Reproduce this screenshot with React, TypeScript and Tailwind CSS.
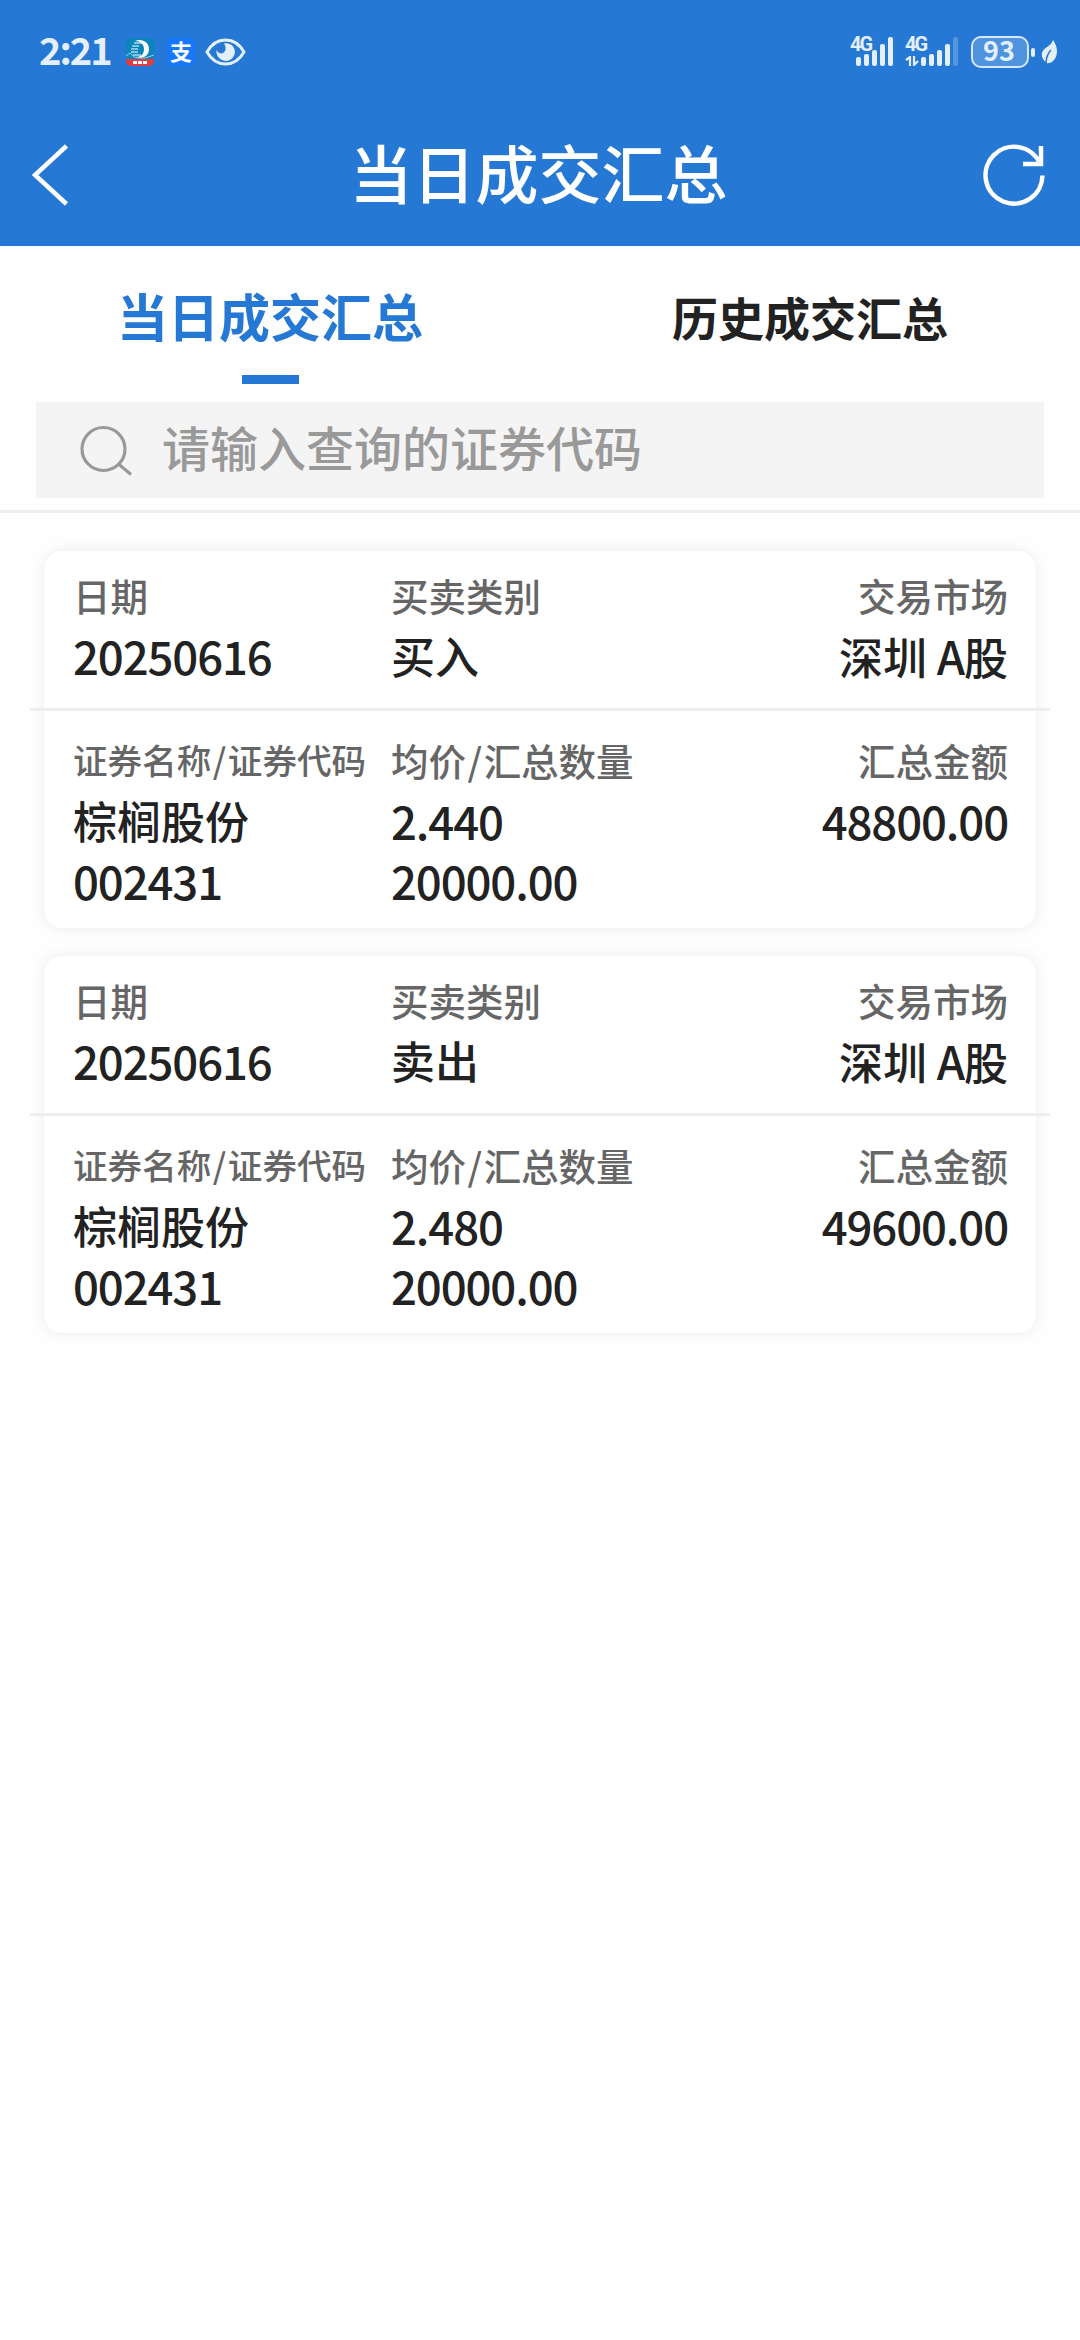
import { ReactNode } from 'react';

interface Trade {
  date: string;
  side: string;
  market: string;
  name: string;
  code: string;
  price: string;
  quantity: string;
  amount: string;
}

const trades: Trade[] = [
  {
    date: '20250616',
    side: '买入',
    market: '深圳 A股',
    name: '棕榈股份',
    code: '002431',
    price: '2.440',
    quantity: '20000.00',
    amount: '48800.00',
  },
  {
    date: '20250616',
    side: '卖出',
    market: '深圳 A股',
    name: '棕榈股份',
    code: '002431',
    price: '2.480',
    quantity: '20000.00',
    amount: '49600.00',
  },
];

function SignalBars({ weak }: { weak?: boolean }) {
  return (
    <svg width="38" height="30" viewBox="0 0 38 30" fill="#e4effc">
      <rect x="0" y="20" width="5" height="9" rx="2" />
      <rect x="8" y="17" width="5" height="12" rx="2" />
      <rect x="16" y="13" width="5" height="16" rx="2" />
      <rect x="24" y="7" width="5" height="22" rx="2" />
      <rect x="32" y="0" width="5" height="29" rx="2" opacity={weak ? 0.25 : 1} />
    </svg>
  );
}

function StatusBar() {
  return (
    <div className="flex h-[104px] items-center pl-[39px] pr-[22px] text-[#e4effc]">
      <span className="w-[87px] pb-[6px] font-['Noto_Sans_CJK_SC',sans-serif] text-[38px] leading-none font-bold tracking-[-2px]">
        2:21
      </span>
      {/* Icône de la banque */}
      <svg width="28" height="28" viewBox="0 0 28 28">
        <rect width="28" height="28" rx="5" fill="#0b86bd" />
        <path d="M0 21h28v2a5 5 0 0 1-5 5H5a5 5 0 0 1-5-5z" fill="#e23c42" />
        <path d="M9 3C16 0 23 4 23 11c0 7-7 11-13 8 5 0 8-3 8-8s-4-8-9-8z" fill="#fff" />
        <path d="M8 5h8M6 8h7M5 11h7M5 14h7M7 17h8" stroke="#fff" strokeWidth="1.2" />
        <path d="M0 18l4-3 4 4 5 1 6 0 9-3" stroke="#8fd0ea" strokeWidth="1" fill="none" />
        <path d="M7 24.500h14" stroke="#fff" strokeWidth="3" strokeDasharray="4 1" />
      </svg>
      <span className="ml-[13px] flex size-[28px] items-center justify-center rounded-[5px] bg-[#1677ff] pb-[4px] font-['Noto_Sans_CJK_SC',sans-serif] text-[22px] leading-none font-bold text-white">
        支
      </span>
      <svg className="ml-[10px]" width="41" height="28" viewBox="0 0 41 28" fill="none">
        <path
          d="M2 14C6.500 6 13 2 20.500 2S34.500 6 39 14c-4.500 8-11 12-18.500 12S6.500 22 2 14z"
          stroke="#e4effc"
          strokeWidth="3"
        />
        <path d="M19 5.500c6-1.500 11 3 11 8.500a9.300 9.300 0 0 1-18.500 1V12c1.500 3 4 4 6.500 3 3-1.500 3.500-5.500 1-9.500z" fill="#e4effc" />
      </svg>

      <div className="ml-auto flex items-center">
        <div className="relative h-[30px] w-[45px]">
          <span className="absolute -top-[3px] left-0 font-['Roboto',sans-serif] text-[20px] leading-none font-bold tracking-[-2px]">4G</span>
          <div className="ml-[6px]">
            <SignalBars />
          </div>
        </div>
        <div className="relative ml-[10px] h-[30px] w-[55px]">
          <span className="absolute -top-[3px] left-0 font-['Roboto',sans-serif] text-[20px] leading-none font-bold tracking-[-2px]">4G</span>
          <svg className="absolute top-[19px] left-0" width="14" height="10" viewBox="0 0 14 10" fill="none" stroke="#e4effc" strokeWidth="2.200">
            <path d="M1 4l4-3v9M9 0v9l4-4" />
          </svg>
          <div className="ml-[16px]">
            <SignalBars weak />
          </div>
        </div>
        <div className="ml-[11px] flex h-[32px] w-[58px] items-center justify-center rounded-[10px] border-2 border-[#d6e8fb] bg-[#5093df] pr-[2px] pb-[5px] font-['Noto_Sans_CJK_SC',sans-serif] text-[27px] leading-none font-bold">
          93
        </div>
        <span className="ml-[2px] h-[9px] w-[4px] rounded-full bg-[#e4effc]" />
        <svg className="ml-[6px]" width="17" height="26" viewBox="0 0 17 26">
          <path d="M12 1c5 7 6 16-1 22-2 1-4 1.500-5 1-7-5-7-12 0-16 3-2 5-4 6-7z" fill="#e4effc" />
          <path d="M10 11C6 15 5 19 5 25" stroke="#2578d4" strokeWidth="1.500" fill="none" />
        </svg>
      </div>
    </div>
  );
}

function Header() {
  return (
    <header className="h-[246px] bg-[#2578d4]">
      <StatusBar />
      <div className="flex h-[142px] items-center justify-between pr-[35px] pb-[1px] pl-[32px]">
        <svg width="62" height="62" viewBox="0 0 62 62" fill="none" stroke="#fff" strokeWidth="4.500">
          <path d="M34.500 2L3 31l31.500 29" />
        </svg>
        <h1 className="pb-[9px] text-[63px] leading-none font-medium text-white">当日成交汇总</h1>
        <svg width="62" height="62" viewBox="0 0 62 62" fill="none" stroke="#fff" strokeWidth="4.500">
          <path d="M59.500 31.500A28.500 28.500 0 1 1 57 19.500" />
          <path d="M58 2v18H40" />
        </svg>
      </div>
    </header>
  );
}

function Tabs() {
  return (
    <div className="flex h-[156px] text-center leading-none">
      <div className="flex flex-1 flex-col items-center pt-[44px]">
        <span className="h-[85px] text-[51px] font-bold text-[#2578d4]">当日成交汇总</span>
        <span className="h-[9px] w-[57px] bg-[#2578d4]" />
      </div>
      <div className="flex-1 pt-[47px] text-[46px] font-bold text-[#222]">历史成交汇总</div>
    </div>
  );
}

function SearchBox() {
  return (
    <div className="h-[111px] border-b-[3px] border-[#eee] px-[36px]">
      <div className="flex h-[96px] items-center bg-[#f4f4f4] pl-[44px]">
        <svg width="53" height="52" viewBox="0 0 53 52" fill="none" stroke="#999" strokeWidth="3.200">
          <circle cx="23.500" cy="25" r="21.500" />
          <path d="M38.500 40L51 50.500" />
        </svg>
        <span className="ml-[29px] pb-[8px] text-[48px] leading-none font-medium text-[#999]">请输入查询的证券代码</span>
      </div>
    </div>
  );
}

// Les chiffres sont un peu plus grands et plus serrés que les caractères chinois
function Num({ children }: { children: ReactNode }) {
  return <span className="text-[45.5px] tracking-[-1.1px]">{children}</span>;
}

function Slash() {
  return <span className="mx-[1.5px]">/</span>;
}

function Label({ children, small }: { children: ReactNode; small?: boolean }) {
  return (
    <div className={`h-[60.5px] leading-[61px] font-medium text-[#666] ${small ? 'text-[34.6px]' : 'text-[37.5px]'}`}>{children}</div>
  );
}

function Value({ children }: { children: ReactNode }) {
  return <div className="h-[60px] text-[44px] leading-[61px] font-medium text-[#222]">{children}</div>;
}

function TradeCard({ trade }: { trade: Trade }) {
  return (
    <div className="h-[377px] rounded-[18px] bg-white pr-[28px] pl-[29px] whitespace-nowrap shadow-[0_0_14px_rgba(0,0,0,0.08)]">
      <div className="grid h-[157px] grid-cols-[318px_1fr_auto] pt-[13px]">
        <div>
          <Label>日期</Label>
          <Value><Num>{trade.date}</Num></Value>
        </div>
        <div>
          <Label>买卖类别</Label>
          <Value>{trade.side}</Value>
        </div>
        <div className="text-right">
          <Label>交易市场</Label>
          <Value>
            {trade.market.split('A')[0]}
            <Num>A</Num>
            {trade.market.split('A')[1]}
          </Value>
        </div>
      </div>
      <div className="-mr-[42px] -ml-[43px] h-[3px] bg-[#eee]" />
      <div className="grid grid-cols-[318px_1fr_auto] pt-[18px]">
        <div>
          <Label small>证券名称<Slash />证券代码</Label>
          <Value>{trade.name}</Value>
          <Value><Num>{trade.code}</Num></Value>
        </div>
        <div>
          <Label>均价<Slash />汇总数量</Label>
          <Value><Num>{trade.price}</Num></Value>
          <Value><Num>{trade.quantity}</Num></Value>
        </div>
        <div className="text-right">
          <Label>汇总金额</Label>
          <Value><Num>{trade.amount}</Num></Value>
        </div>
      </div>
    </div>
  );
}

export default function App() {
  return (
    <div className="h-[2340px] w-[1080px] overflow-hidden bg-[#fefefe] font-['Noto_Sans_CJK_SC',sans-serif]">
      <Header />
      <Tabs />
      <SearchBox />
      <main className="flex flex-col gap-[28px] px-[44px] pt-[38px]">
        {trades.map((trade, index) => (
          <TradeCard key={index} trade={trade} />
        ))}
      </main>
    </div>
  );
}
